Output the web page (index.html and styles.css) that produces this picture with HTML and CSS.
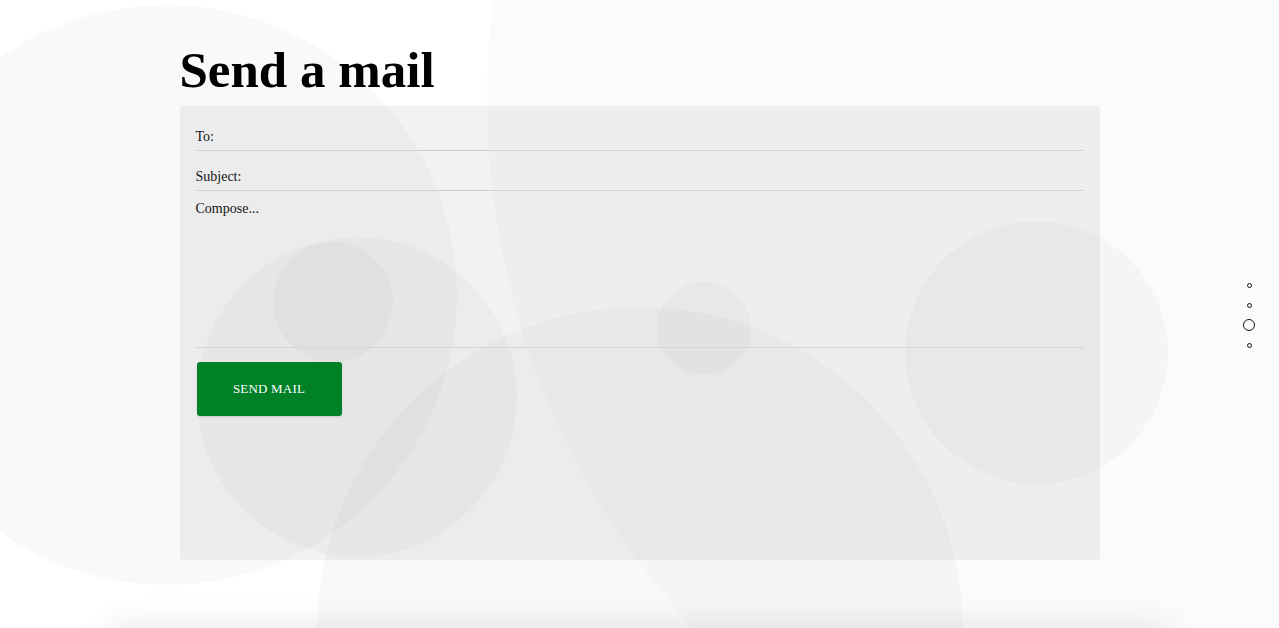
FILE: index.html
```html
<!DOCTYPE html>
<html lang="en">
<head>
<meta charset="utf-8">
<title>Send a mail</title>
<link rel="stylesheet" href="styles.css">
</head>
<body>
<div class="bubbles" aria-hidden="true">
  <span class="bubble b-left"></span>
  <span class="bubble b-huge"></span>
  <span class="bubble b-mid"></span>
  <span class="bubble b-small"></span>
  <span class="bubble b-tiny"></span>
  <span class="bubble b-right"></span>
  <span class="bubble b-bottom"></span>
</div>

<main class="page">
  <h1 class="title">Send a mail</h1>
  <form class="card">
    <div class="field"><span class="label">To:</span></div>
    <div class="field field-gap"><span class="label">Subject:</span></div>
    <div class="field field-body"><span class="label">Compose...</span></div>
    <button type="button" class="send">SEND MAIL</button>
  </form>
  <section class="next"></section>
</main>

<nav class="dots">
  <span class="dot"></span>
  <span class="dot"></span>
  <span class="dot dot-active"></span>
  <span class="dot"></span>
</nav>
</body>
</html>
```

FILE: styles.css
```css
html, body {
  margin: 0;
  padding: 0;
  height: 628px;
  overflow: hidden;
  background: #ffffff;
  font-family: "Liberation Serif", "DejaVu Serif", serif;
  color: #111;
}

.bubbles {
  position: absolute;
  inset: 0;
  overflow: hidden;
  z-index: 0;
  pointer-events: none;
}

.bubble {
  position: absolute;
  border-radius: 50%;
  background: rgba(0, 0, 0, 0.022);
}

.b-left   { left: -123px; top: 5px;   width: 580px;  height: 580px; }
.b-huge   { left: 487px;  top: -680px; width: 1560px; height: 1560px; background: rgba(0,0,0,0.015); }
.b-mid    { left: 197px;  top: 237px; width: 320px;  height: 320px; }
.b-small  { left: 273px;  top: 242px; width: 120px;  height: 120px; }
.b-tiny   { left: 657px;  top: 281px; width: 94px;   height: 94px; }
.b-right  { left: 905px;  top: 221px; width: 263px;  height: 263px; }
.b-bottom { left: 317px;  top: 307px; width: 646px;  height: 646px; }

.page {
  position: relative;
  z-index: 1;
  width: 920px;
  margin: 0 auto;
  padding-top: 40px;
}

.title {
  margin: 0 0 6px;
  font-size: 51px;
  line-height: 60px;
  font-weight: 700;
  color: #000;
}

.card {
  box-sizing: border-box;
  height: 454px;
  padding: 16px 16px 0;
  border-radius: 4px;
  background: rgba(0, 0, 0, 0.05);
  display: flex;
  flex-direction: column;
}

.field {
  box-sizing: border-box;
  height: 29px;
  padding-top: 1px;
  border-bottom: 1px solid #d0d0d0;
  display: flex;
  align-items: center;
  font-size: 14px;
  color: #151515;
}

.field-gap {
  margin-top: 11px;
}

.field-body {
  margin-top: 7px;
  height: 150px;
  align-items: flex-start;
  padding-top: 2px;
  line-height: 17px;
  border-bottom-color: #d6d6d6;
}

.send {
  align-self: flex-start;
  margin: 14px 0 0 1px;
  width: 145px;
  height: 54px;
  border: 0;
  border-radius: 3px;
  background: #008027;
  color: #ffffff;
  font-family: "Liberation Serif", "DejaVu Serif", serif;
  font-size: 13px;
  letter-spacing: 0.2px;
  box-shadow: 0 1px 2px rgba(0, 0, 0, 0.12);
  cursor: pointer;
}

.next {
  width: 1060px;
  margin: 68px 0 0 -70px;
  height: 40px;
  background: #ffffff;
  box-shadow: 0 0 34px rgba(0, 0, 0, 0.11);
}

.dots {
  position: fixed;
  right: 20px;
  top: 275px;
  width: 20px;
  display: flex;
  flex-direction: column;
  align-items: center;
  z-index: 2;
}

.dot {
  box-sizing: border-box;
  width: 5px;
  height: 5px;
  margin: 7.5px 0;
  border: 1px solid #111;
  border-radius: 50%;
}

.dot-active {
  width: 12px;
  height: 12px;
  margin: 4px 0;
  border-width: 1.3px;
}
```
